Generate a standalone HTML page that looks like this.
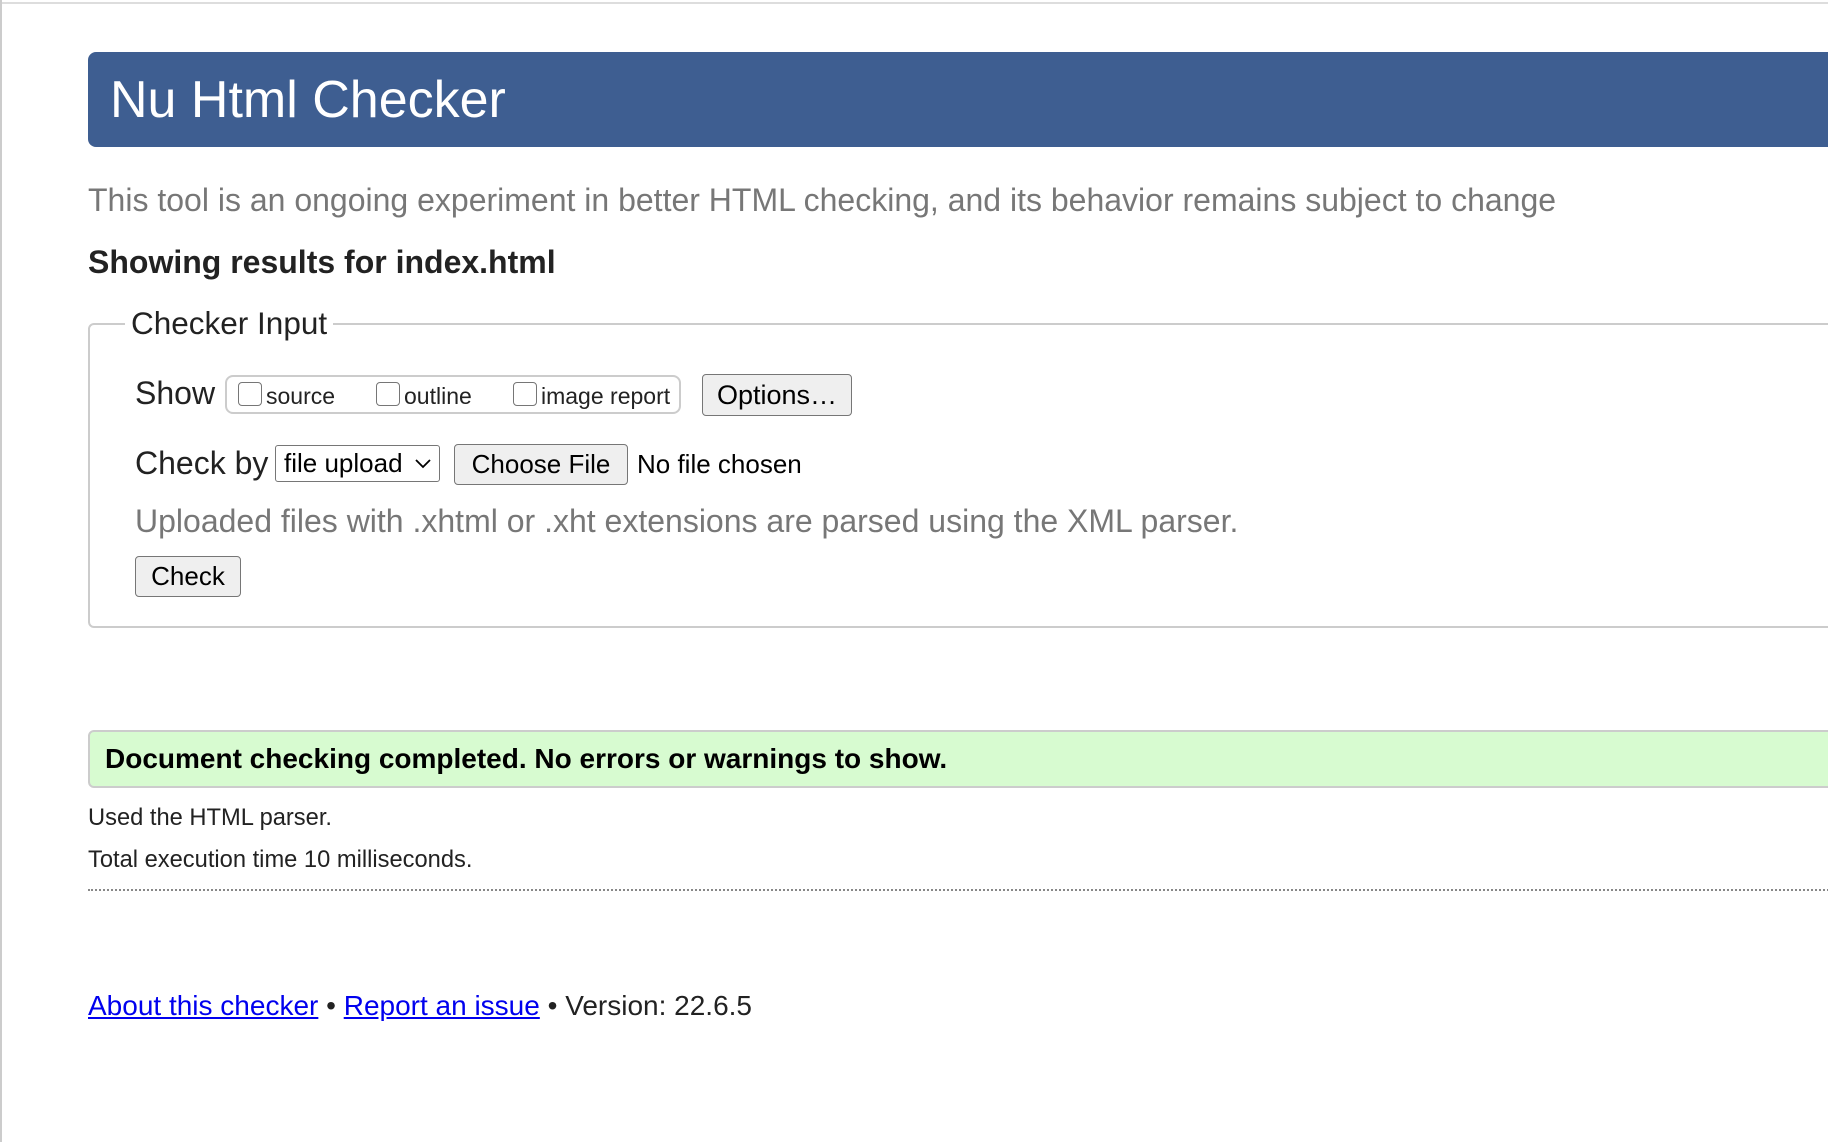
<!DOCTYPE html>
<html><head><meta charset="utf-8"><style>
body{margin:0;width:1828px;height:1142px;background:#fff;font-family:"Liberation Sans",Arial,sans-serif;position:relative;overflow:hidden;color:#222}
.a{position:absolute;white-space:nowrap}
.btn{position:absolute;background:#efefef;border:1.5px solid #767676;border-radius:4px;box-sizing:border-box;display:flex;align-items:center;justify-content:center;color:#000}
.cb{display:inline-block;width:24px;height:24px;border:1.5px solid #767676;border-radius:4px;box-sizing:border-box;vertical-align:-2px;margin-right:4px;background:#fff}
</style></head><body>
<div class="a" style="left:0;top:2px;width:1828px;height:2px;background:#ddd"></div>
<div class="a" style="left:0;top:0;width:2px;height:1142px;background:#ccc"></div>
<div class="a" style="left:88px;top:52px;width:1760px;height:95px;background:#3e5e91;border-radius:8px"></div>
<div class="a" style="left:110px;top:67px;font-size:52px;color:#fff;line-height:66px">Nu Html Checker</div>
<div class="a" style="left:88px;top:181px;font-size:32px;color:#777;line-height:38px">This tool is an ongoing experiment in better HTML checking, and its behavior remains subject to change</div>
<div class="a" style="left:88px;top:243px;font-size:32px;font-weight:bold;color:#222;line-height:38px">Showing results for index.html</div>
<div class="a" style="left:88px;top:323px;width:1760px;height:305px;border:2px solid #ccc;border-radius:6px;box-sizing:border-box"></div>
<div class="a" style="left:125px;top:304px;padding:0 6px;background:#fff;font-size:31.5px;line-height:38px">Checker Input</div>
<div class="a" style="left:135px;top:374px;font-size:32px;line-height:38px">Show</div>
<div class="a" style="left:225px;top:375px;width:456px;height:39px;border:2px solid #ccc;border-radius:8px;box-sizing:border-box"></div>
<div class="a" style="left:238px;top:378px;font-size:23px;line-height:36px"><span class="cb"></span>source</div>
<div class="a" style="left:376px;top:378px;font-size:23px;line-height:36px"><span class="cb"></span>outline</div>
<div class="a" style="left:513px;top:378px;font-size:23px;line-height:36px"><span class="cb"></span>image report</div>
<div class="btn" style="left:702px;top:374px;width:150px;height:42px;font-size:27px">Options…</div>
<div class="a" style="left:135px;top:444px;font-size:32px;line-height:38px">Check by</div>
<div class="a" style="left:275px;top:445px;width:165px;height:37px;border:1.5px solid #767676;border-radius:3px;box-sizing:border-box;font-size:26px;line-height:34px;padding-left:8px;color:#000">file upload
<svg style="position:absolute;right:8px;top:13px" width="16" height="10" viewBox="0 0 16 10"><path d="M1 1l7 7 7-7" fill="none" stroke="#000" stroke-width="1.8"/></svg></div>
<div class="btn" style="left:454px;top:444px;width:174px;height:41px;font-size:26px">Choose File</div>
<div class="a" style="left:637px;top:446px;font-size:26px;line-height:36px;color:#000">No file chosen</div>
<div class="a" style="left:135px;top:502px;font-size:32px;color:#777;line-height:38px">Uploaded files with .xhtml or .xht extensions are parsed using the XML parser.</div>
<div class="btn" style="left:135px;top:556px;width:106px;height:41px;font-size:26px">Check</div>
<div class="a" style="left:88px;top:730px;width:1760px;height:58px;background:#d7fbd0;border:2px solid #ccc;border-radius:6px;box-sizing:border-box"></div>
<div class="a" style="left:105px;top:742px;font-size:28px;font-weight:bold;color:#000;line-height:34px">Document checking completed. No errors or warnings to show.</div>
<div class="a" style="left:88px;top:804px;font-size:23.7px;line-height:28px">Used the HTML parser.</div>
<div class="a" style="left:88px;top:846px;font-size:23.7px;line-height:28px">Total execution time 10 milliseconds.</div>
<div class="a" style="left:88px;top:889px;width:1760px;border-top:2px dotted #888"></div>
<div class="a" style="left:88px;top:989px;font-size:28px;line-height:34px"><span style="color:#00e;text-decoration:underline">About this checker</span> • <span style="color:#00e;text-decoration:underline">Report an issue</span> • Version: 22.6.5</div>
</body></html>
